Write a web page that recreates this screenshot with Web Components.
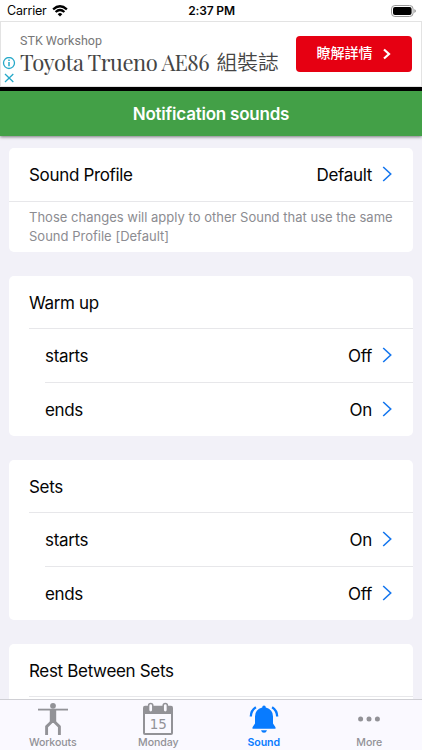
<!DOCTYPE html>
<html lang="en">
<head>
<meta charset="utf-8">
<title>Notification sounds</title>
<style>
html,body{margin:0;height:100%;overflow:hidden}
body{font-family:Inter,"Liberation Sans",sans-serif;background:#f2f1f8;color:#050505}
</style>
</head>
<body>
<phone-screen>
  <status-bar slot="top"></status-bar>
  <ad-banner slot="top"></ad-banner>
  <title-bar slot="top">Notification sounds</title-bar>
  <settings-card>
    <settings-row value="Default" line="full">Sound Profile</settings-row>
    <settings-note><span>Those changes will apply to other Sound that use the same</span><br>Sound Profile [Default]</settings-note>
  </settings-card>
  <settings-card>
    <settings-row line="text">Warm up</settings-row>
    <settings-row value="Off" line="text" inset>starts</settings-row>
    <settings-row value="On" inset>ends</settings-row>
  </settings-card>
  <settings-card>
    <settings-row line="text">Sets</settings-row>
    <settings-row value="On" line="text" inset>starts</settings-row>
    <settings-row value="Off" inset>ends</settings-row>
  </settings-card>
  <settings-card>
    <settings-row line="text">Rest Between Sets</settings-row>
    <settings-row value="On" inset>starts</settings-row>
  </settings-card>
  <tab-bar slot="bottom">
    <tab-item label="Workouts"><svg width="32" height="34" viewBox="0 0 32 34" fill="none" stroke="#929297"><circle cx="16" cy="3.8" r="2.9" fill="#929297" stroke="none"/><path d="M1 7.6H31" stroke-width="1.8"/><path d="M12.8 7H19.2V21H12.8Z" fill="#929297" stroke="none"/><path d="M14.6 19.8L9.6 24.6V33M17.4 19.8L22.4 24.6V33" stroke-width="2.9" stroke-linejoin="round"/></svg></tab-item>
    <tab-item label="Monday"><svg width="32" height="34" viewBox="0 0 32 34"><path d="M3 3.7H29Q31 3.7 31 5.7V31Q31 33 29 33H3Q1 33 1 31V5.7Q1 3.7 3 3.7Z" fill="#929297"/><path d="M3 12H29V31H3Z" fill="#faf9ff"/><rect x="6.6" y="1.6" width="4.2" height="8.6" rx="2.1" fill="#faf9ff" stroke="#929297" stroke-width="1.5"/><rect x="21.2" y="1.6" width="4.2" height="8.6" rx="2.1" fill="#faf9ff" stroke="#929297" stroke-width="1.5"/><text x="16.3" y="27" text-anchor="middle" font-family="DejaVu Sans" font-size="13.5" fill="#929297">15</text></svg></tab-item>
    <tab-item label="Sound" active><svg width="32" height="34" viewBox="0 0 32 34" fill="#087bff"><path d="M14.2 5.5Q14.2 3.6 16 3.6T17.8 5.5Q25 7.3 25 14.5V21.5L27.5 25.3V26.8H4.5V25.3L7 21.5V14.5Q7 7.3 14.2 5.5Z"/><path d="M13 28.2H19Q18.3 30.8 16 30.8T13 28.2Z"/><path d="M2.8 14.5Q3 8.3 7.9 5.2M29.2 14.5Q29 8.3 24.1 5.2" fill="none" stroke="#087bff" stroke-width="2.3"/></svg></tab-item>
    <tab-item label="More"><svg width="32" height="34" viewBox="0 0 32 34" fill="#929297"><circle cx="7.6" cy="17" r="2.5"/><circle cx="16" cy="17" r="2.5"/><circle cx="24.4" cy="17" r="2.5"/></svg></tab-item>
  </tab-bar>
</phone-screen>
<script>
const define = (name, render) => customElements.define(name, class extends HTMLElement {
  constructor() {
    super();
    this.attachShadow({ mode: 'open' }).innerHTML = render(this);
  }
});

define('phone-screen', () => `<style>
:host{display:flex;flex-direction:column;width:422px;height:750px;overflow:hidden;background:#f2f1f8}
main{flex:1;min-height:0;overflow:hidden;display:flex;flex-direction:column;gap:24px;padding:12px 9px 0 8.5px;box-sizing:border-box}
header{position:relative;z-index:1}
</style><header><slot name="top"></slot></header><main><slot></slot></main><slot name="bottom"></slot>`);

define('status-bar', () => `<style>
:host{display:grid;grid-template-columns:1fr auto 1fr;align-items:center;height:21px;background:#fff;font-size:12.5px;padding:0 6px 0 7px;box-sizing:border-box;line-height:21px}
.left{display:flex;align-items:center;gap:5px;letter-spacing:-.2px}.time{font-weight:600;font-size:12px;letter-spacing:-.15px}
.right{justify-self:end;display:flex}
</style><div class="left"><span>Carrier</span><svg width="16" height="12" viewBox="0 0 16 12" fill="none" stroke="#000" stroke-width="2.3"><path d="M1.1 4.3Q8 -1.7 14.9 4.3M3.6 7Q8 3.1 12.4 7"/><path d="M5.7 9.2Q8 7 10.3 9.2L8 11.5Z" fill="#000" stroke="none"/></svg></div><span class="time">2:37 PM</span><div class="right"><svg width="25" height="12" viewBox="0 0 25 12"><rect x=".5" y=".5" width="21.6" height="11" rx="3.4" fill="none" stroke="#999"/><rect x="2" y="2" width="18.6" height="8" rx="2" fill="#000"/><path d="M23.3 4Q25 5 25 6T23.3 8Z" fill="#999"/></svg></div>`);

define('ad-banner', () => `<style>
:host{display:block;height:70px;box-sizing:border-box;border-bottom:4px solid #000}
.ad{display:flex;height:66px;box-sizing:border-box;background:#fff;border:1px solid #e3e3e3}
.marks{width:19px;padding:35px 0 0 1px;box-sizing:border-box}
.marks svg{display:block}
.copy{flex:1;white-space:nowrap;color:#454545}
.brand{font:12.5px/14px Roboto,sans-serif;color:#777;margin-top:12px}
.head{font:22px/28px "Playfair Display","Liberation Serif","Noto Sans CJK TC",serif;display:flex;align-items:center}
.lat{letter-spacing:-.48px}
.head .cjk{font:350 20.8px/28px "Noto Sans CJK TC",sans-serif;margin:-2px 0 0 7.3px}
.cta{width:116px;height:36px;margin:14px 9.5px 0 0;background:#e60012;border-radius:4px;color:#fff;display:flex;align-items:center;justify-content:center;gap:10px;font:500 14px/34px "Noto Sans CJK TC",sans-serif;box-sizing:border-box}
.cta span{margin-top:-5px}
</style><div class="ad"><div class="marks"><svg width="14" height="28" viewBox="0 0 14 28" fill="none" stroke="#27a9c9" stroke-width="1.3"><circle cx="7" cy="6" r="5.5"/><path d="M7 5V9.2M7 2.6V4" stroke-width="1.5"/><path d="M3 17L11.3 25M11.3 17L3 25"/></svg></div>
<div class="copy"><div class="brand">STK Workshop</div><div class="head"><span class="lat">Toyota Trueno AE86</span><span class="cjk">組裝誌</span></div></div>
<div class="cta"><span>瞭解詳情</span><svg width="8" height="12" viewBox="0 0 8 12" fill="none" stroke="#fff" stroke-width="2.2"><path d="M1 1.5L6 6L1 10.5"/></svg></div></div>`);

define('title-bar', () => `<style>
:host{display:block;height:45px;background:#43a047;color:#fff;text-align:center;font-size:17px;font-weight:600;letter-spacing:-.22px;line-height:46px;box-shadow:0 1px 3px rgba(0,0,0,.5)}
</style><slot></slot>`);

define('settings-card', () => `<style>
:host{display:block;flex:none;width:404.5px;background:#fff;border-radius:5px;overflow:hidden}
</style><slot></slot>`);

define('settings-row', el => `<style>
:host{display:block;height:53.33px;padding-left:20.5px;font-size:17px;line-height:54px;letter-spacing:-.33px;box-sizing:border-box}
:host([inset]){padding-left:36.5px}
:host([line=full]){padding-left:0;height:54px}
.row{display:flex;height:100%;box-sizing:border-box;padding:2px 21px 0 0;align-items:center}
:host([line=full]) .row{padding:.5px 21px 0 20.5px}
:host([inset]) .row{padding-top:1px}
:host([line]) .row{border-bottom:1px solid #e7e7ea}
.label{flex:1}
svg{margin:-1px 0 0 10px}
</style><div class="row"><span class="label"><slot></slot></span>${el.getAttribute('value') ? `<span>${el.getAttribute('value')}</span><svg width="10" height="16" viewBox="0 0 10 16" fill="none" stroke="#1677ee" stroke-width="1.6"><path d="M1.2 1L8.7 8L1.2 15"/></svg>` : ''}</div>`);

define('settings-note', () => `<style>
:host{display:block;height:50px;padding:6.3px 0 0 20.5px;box-sizing:border-box;font-size:13px;line-height:18.3px;color:#8c8c91;letter-spacing:.01px;white-space:nowrap}
</style><slot></slot>`);

define('tab-bar', () => `<style>
:host{display:grid;grid-template-columns:repeat(4,1fr);height:51px;box-sizing:border-box;background:#faf9ff;border-top:1px solid #cfcfd4;position:relative;z-index:1}
</style><slot></slot>`);

define('tab-item', el => `<style>
:host{display:flex;flex-direction:column;align-items:center;color:#929297;font-size:10.6px;line-height:14px;font-weight:500;letter-spacing:-.1px;padding-top:2px}
:host([active]){color:#087bff;font-weight:600}
</style><slot></slot><span>${el.getAttribute('label')}</span>`);
</script>
</body>
</html>
